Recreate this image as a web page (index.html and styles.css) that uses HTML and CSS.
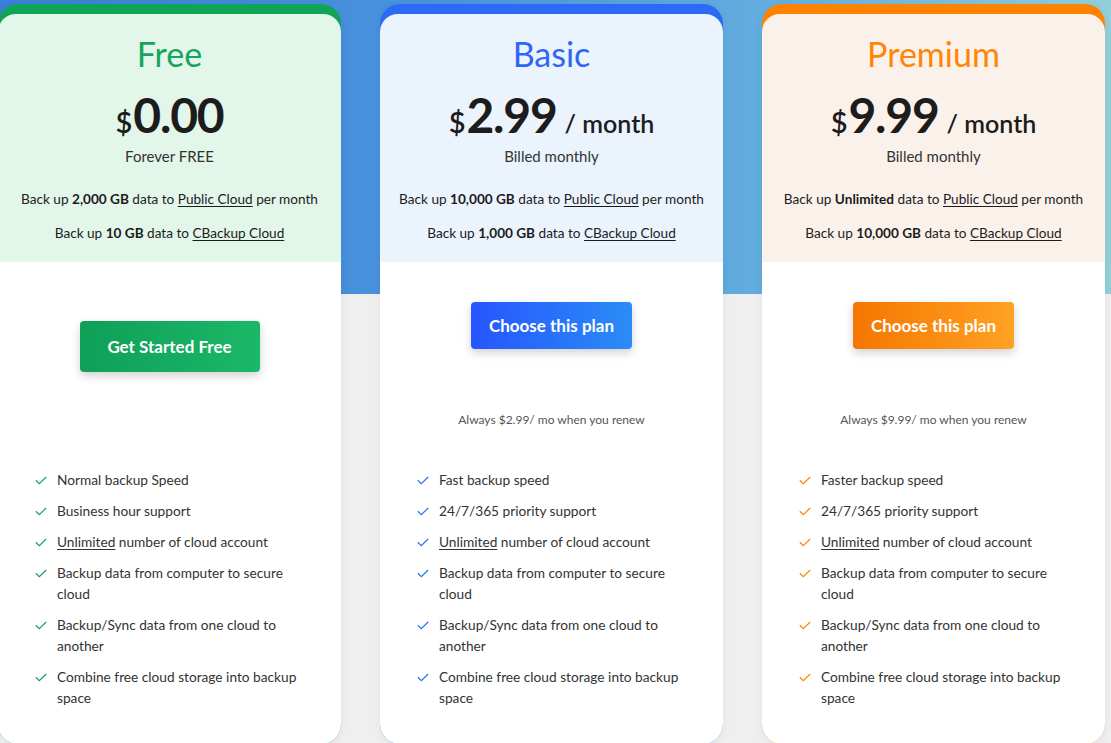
FILE: index.html
```html
<!DOCTYPE html>
<html lang="en">
<head>
<meta charset="utf-8">
<title>Pricing</title>
<link rel="stylesheet" href="styles.css">
</head>
<body>
<div class="page">
  <div class="hero-bg"></div>
  <div class="plans">
    <div class="card card-free">
      <div class="head">
        <h2 class="title">Free</h2>
        <div class="price"><span class="cur">$</span><span class="amt">0.00</span></div>
        <div class="billing">Forever FREE</div>
        <p class="quota">Back up <b>2,000 GB</b> data to <u>Public Cloud</u> per month</p>
        <p class="quota">Back up <b>10 GB</b> data to <u>CBackup Cloud</u></p>
      </div>
      <div class="body">
        <div class="action action-free">
          <a class="btn btn-free">Get Started Free</a>
        </div>
        <ul class="features">
          <li><svg class="chk" viewBox="0 0 12 9"><path d="M0.8 4.2 L4.3 7.6 L11.2 1"/></svg><span>Normal backup Speed</span></li>
          <li><svg class="chk" viewBox="0 0 12 9"><path d="M0.8 4.2 L4.3 7.6 L11.2 1"/></svg><span>Business hour support</span></li>
          <li><svg class="chk" viewBox="0 0 12 9"><path d="M0.8 4.2 L4.3 7.6 L11.2 1"/></svg><span><u>Unlimited</u> number of cloud account</span></li>
          <li><svg class="chk" viewBox="0 0 12 9"><path d="M0.8 4.2 L4.3 7.6 L11.2 1"/></svg><span>Backup data from computer to secure cloud</span></li>
          <li><svg class="chk" viewBox="0 0 12 9"><path d="M0.8 4.2 L4.3 7.6 L11.2 1"/></svg><span>Backup/Sync data from one cloud to another</span></li>
          <li><svg class="chk" viewBox="0 0 12 9"><path d="M0.8 4.2 L4.3 7.6 L11.2 1"/></svg><span>Combine free cloud storage into backup space</span></li>
        </ul>
      </div>
    </div>

    <div class="card card-basic">
      <div class="head">
        <h2 class="title">Basic</h2>
        <div class="price"><span class="cur">$</span><span class="amt">2.99</span><span class="per">/ month</span></div>
        <div class="billing">Billed monthly</div>
        <p class="quota">Back up <b>10,000 GB</b> data to <u>Public Cloud</u> per month</p>
        <p class="quota">Back up <b>1,000 GB</b> data to <u>CBackup Cloud</u></p>
      </div>
      <div class="body">
        <div class="action">
          <a class="btn btn-basic">Choose this plan</a>
          <div class="renew">Always $2.99/ mo when you renew</div>
        </div>
        <ul class="features">
          <li><svg class="chk" viewBox="0 0 12 9"><path d="M0.8 4.2 L4.3 7.6 L11.2 1"/></svg><span>Fast backup speed</span></li>
          <li><svg class="chk" viewBox="0 0 12 9"><path d="M0.8 4.2 L4.3 7.6 L11.2 1"/></svg><span>24/7/365 priority support</span></li>
          <li><svg class="chk" viewBox="0 0 12 9"><path d="M0.8 4.2 L4.3 7.6 L11.2 1"/></svg><span><u>Unlimited</u> number of cloud account</span></li>
          <li><svg class="chk" viewBox="0 0 12 9"><path d="M0.8 4.2 L4.3 7.6 L11.2 1"/></svg><span>Backup data from computer to secure cloud</span></li>
          <li><svg class="chk" viewBox="0 0 12 9"><path d="M0.8 4.2 L4.3 7.6 L11.2 1"/></svg><span>Backup/Sync data from one cloud to another</span></li>
          <li><svg class="chk" viewBox="0 0 12 9"><path d="M0.8 4.2 L4.3 7.6 L11.2 1"/></svg><span>Combine free cloud storage into backup space</span></li>
        </ul>
      </div>
    </div>

    <div class="card card-premium">
      <div class="head">
        <h2 class="title">Premium</h2>
        <div class="price"><span class="cur">$</span><span class="amt">9.99</span><span class="per">/ month</span></div>
        <div class="billing">Billed monthly</div>
        <p class="quota">Back up <b>Unlimited</b> data to <u>Public Cloud</u> per month</p>
        <p class="quota">Back up <b>10,000 GB</b> data to <u>CBackup Cloud</u></p>
      </div>
      <div class="body">
        <div class="action">
          <a class="btn btn-premium">Choose this plan</a>
          <div class="renew">Always $9.99/ mo when you renew</div>
        </div>
        <ul class="features">
          <li><svg class="chk" viewBox="0 0 12 9"><path d="M0.8 4.2 L4.3 7.6 L11.2 1"/></svg><span>Faster backup speed</span></li>
          <li><svg class="chk" viewBox="0 0 12 9"><path d="M0.8 4.2 L4.3 7.6 L11.2 1"/></svg><span>24/7/365 priority support</span></li>
          <li><svg class="chk" viewBox="0 0 12 9"><path d="M0.8 4.2 L4.3 7.6 L11.2 1"/></svg><span><u>Unlimited</u> number of cloud account</span></li>
          <li><svg class="chk" viewBox="0 0 12 9"><path d="M0.8 4.2 L4.3 7.6 L11.2 1"/></svg><span>Backup data from computer to secure cloud</span></li>
          <li><svg class="chk" viewBox="0 0 12 9"><path d="M0.8 4.2 L4.3 7.6 L11.2 1"/></svg><span>Backup/Sync data from one cloud to another</span></li>
          <li><svg class="chk" viewBox="0 0 12 9"><path d="M0.8 4.2 L4.3 7.6 L11.2 1"/></svg><span>Combine free cloud storage into backup space</span></li>
        </ul>
      </div>
    </div>
  </div>
</div>
</body>
</html>
```
FILE: styles.css
```css
* { box-sizing: border-box; }
html, body { margin: 0; padding: 0; }
body {
  background: #efefef;
  font-family: Lato, "Open Sans", "Liberation Sans", sans-serif;
  color: #222;
  width: 1111px;
  height: 743px;
  overflow: hidden;
}
.page { position: relative; width: 1111px; height: 743px; }
.hero-bg {
  position: absolute;
  left: 0; top: 0;
  width: 100%;
  height: 294px;
  background: linear-gradient(90deg, #3b7ed8 0%, #4a94dc 40%, #64aedf 70%, #92cfd8 100%);
}
.plans {
  position: relative;
  display: flex;
  gap: 39px;
  margin-left: -2px;
  padding-top: 4px;
}
.card {
  width: 343px;
  height: 740px;
  border-radius: 20px;
  overflow: hidden;
  display: flex;
  flex-direction: column;
  box-shadow: 0 2px 10px rgba(0, 0, 0, 0.06);
}
.card-free { background: #0fa456; }
.card-basic { background: #2a6af7; }
.card-premium { background: #ff8300; }

.head {
  margin-top: 10px;
  border-radius: 18px 18px 0 0;
  height: 248px;
  text-align: center;
  padding-top: 19px;
}
.card-free .head { background: #e2f6ea; }
.card-basic .head { background: #ebf3fc; }
.card-premium .head { background: #fbf1eb; }

.title {
  margin: 0;
  font-size: 34px;
  font-weight: 400;
  line-height: 42px;
}
.card-free .title { color: #17a55c; }
.card-basic .title { color: #2f66f5; }
.card-premium .title { color: #ff8506; }

.price {
  margin-top: 17px;
  height: 46px;
  display: flex;
  justify-content: center;
  align-items: baseline;
  line-height: 46px;
  color: #1c1c1c;
}
.cur { font-size: 29px; font-weight: 600; margin-right: 1px; }
.amt { font-size: 48px; font-weight: 700; letter-spacing: -1.2px; }
.per { font-size: 25px; font-weight: 600; margin-left: 8px; }

.billing {
  margin-top: 9px;
  font-size: 15px;
  line-height: 18px;
  color: #333;
}
.quota {
  margin: 0;
  font-size: 13.6px;
  line-height: 18px;
  color: #1c1c1c;
}
.billing + .quota { margin-top: 25px; }
.quota + .quota { margin-top: 16px; }
.quota b { font-weight: 700; }
.quota u { text-underline-offset: 2px; }

.body {
  flex: 1;
  background: #fff;
  display: flex;
  flex-direction: column;
}
.action {
  height: 207px;
  display: flex;
  flex-direction: column;
  align-items: center;
  padding-top: 40px;
}
.action-free { padding-top: 59px; }
.btn {
  display: flex;
  align-items: center;
  justify-content: center;
  width: 161px;
  height: 47px;
  border-radius: 4px;
  color: #fff;
  font-size: 17px;
  font-weight: 700;
  box-shadow: 0 4px 10px rgba(0, 0, 0, 0.18);
}
.btn-free {
  width: 180px;
  height: 51px;
  background: linear-gradient(90deg, #0f9f58, #1bb868);
}
.btn-basic { background: linear-gradient(90deg, #2656ff, #2a8cf6); }
.btn-premium { background: linear-gradient(90deg, #f57600, #ffa224); }
.renew {
  margin-top: 63px;
  font-size: 12px;
  line-height: 16px;
  color: #555;
}

.features {
  list-style: none;
  margin: 0;
  padding: 0 40px 0 37px;
}
.features li {
  display: flex;
  align-items: flex-start;
  font-size: 13.7px;
  line-height: 21px;
  color: #333;
  margin-bottom: 10px;
}
.features li u { text-underline-offset: 2px; }
.chk {
  flex: none;
  width: 12px;
  height: 9px;
  margin-top: 7px;
  margin-right: 10px;
  fill: none;
  stroke-width: 1.2;
}
.card-free .chk { stroke: #1aa35a; }
.card-basic .chk { stroke: #2a72f0; }
.card-premium .chk { stroke: #ff8506; }
```
